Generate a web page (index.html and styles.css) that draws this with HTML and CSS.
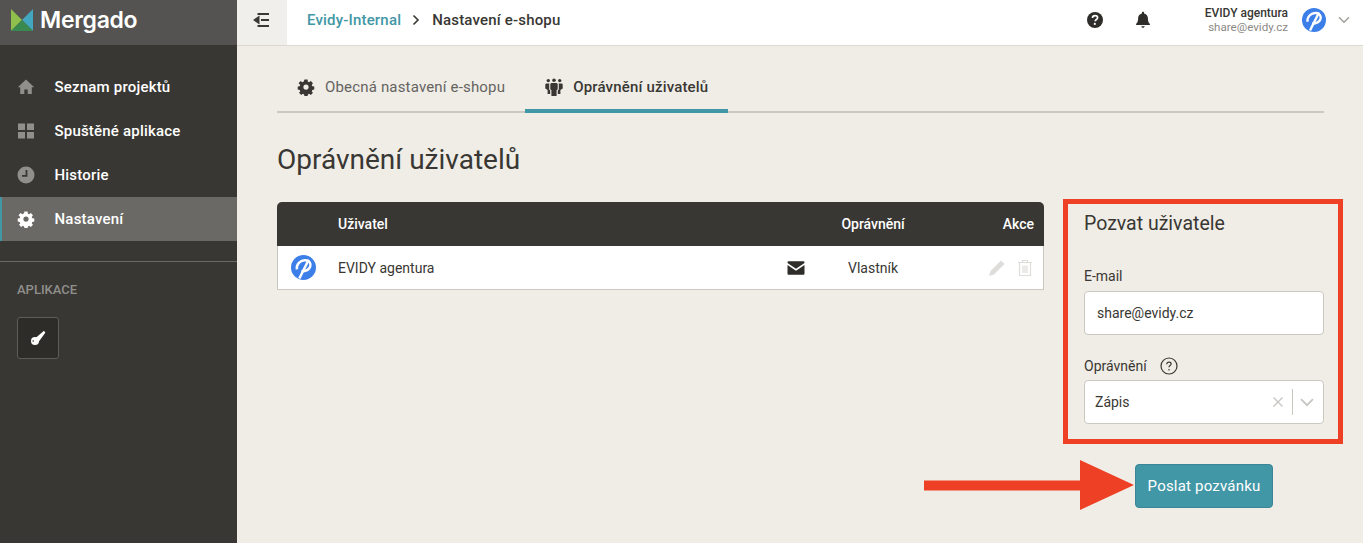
FILE: index.html
```html
<!DOCTYPE html>
<html lang="cs">
<head>
<meta charset="utf-8">
<title>Oprávnění uživatelů</title>
<link rel="stylesheet" href="styles.css">
</head>
<body>
<div class="app">
  <aside class="sidebar">
    <div class="brand">
      <svg class="brand-mark" viewBox="0 0 22 22" width="22" height="22"><polygon points="0,0 11,11 0,22" fill="#8fbf4d"/><polygon points="22,0 11,11 22,22" fill="#43a6c0"/><polygon points="0,22 11,11 22,22" fill="#3a8a50"/></svg>
      <span class="brand-name">Mergado</span>
    </div>
    <nav class="nav">
      <a class="nav-item"><svg class="nav-icon" viewBox="0 0 18 18"><path d="M9 1.500 0.800 9.200h2.400V16h4.100v-4.600h3.400V16h4.100V9.200h2.400z" fill="currentColor"/></svg><span>Seznam projektů</span></a>
      <a class="nav-item"><svg class="nav-icon" viewBox="0 0 18 18"><path d="M1 1.500h7v6.500H1zM10 1.500h7v6.500h-7zM1 10h7v6.500H1zM10 10h7v6.500h-7z" fill="currentColor"/></svg><span>Spuštěné aplikace</span></a>
      <a class="nav-item"><svg class="nav-icon" viewBox="0 0 18 18"><circle cx="9" cy="9" r="8.500" fill="currentColor"/><path d="M9.500 4v5.800H5" fill="none" stroke="#393733" stroke-width="1.800"/></svg><span>Historie</span></a>
      <a class="nav-item is-active"><svg class="nav-icon" viewBox="0 0 18 18"><use href="#gear"/></svg><span>Nastavení</span></a>
    </nav>
    <div class="apps">
      <div class="apps-title">APLIKACE</div>
      <button class="app-tile" type="button"><svg viewBox="0 0 16 16" width="16" height="16"><circle cx="5" cy="11" r="4" fill="#fff"/><path d="M5.500 8 14 .8l1.300 2L8.500 12z" fill="#fff"/><circle cx="3.200" cy="11" r=".8" fill="#2e2c29"/></svg></button>
    </div>
  </aside>
  <div class="content">
    <header class="topbar">
      <button class="collapse" type="button"><svg viewBox="0 0 16 14" width="16" height="14"><path d="M6.500 2.500 0 7l6.500 4.500zM4.500 0H16v2H4.500zM8 6h8v2H8zM4.500 12H16v2H4.500z" fill="#3a3835"/></svg></button>
      <div class="crumbs"><a class="crumb-link">Evidy-Internal</a><svg class="crumb-sep" viewBox="0 0 8 12" width="8" height="12"><path d="M1.500 1.500 6 6l-4.500 4.500" fill="none" stroke="#393733" stroke-width="1.600"/></svg><span class="crumb-current">Nastavení e-shopu</span></div>
      <div class="top-actions">
        <svg class="top-icon" viewBox="0 0 18 18" width="18" height="18"><circle cx="9" cy="9" r="8" fill="#2f2d2a"/><path d="M6.500 7c0-1.500 1.100-2.400 2.600-2.400 1.500 0 2.500.9 2.500 2.100 0 1.900-2.400 1.800-2.400 3.600" fill="none" stroke="#fff" stroke-width="1.700"/><circle cx="8.800" cy="12.900" r="1.100" fill="#fff"/></svg>
        <svg class="top-icon bell" viewBox="0 0 18 18" width="18" height="18"><path d="M9 .8c-.7 0-1.100.5-1.100 1.100v.5C5.400 3 4.100 5 4.100 7.300c0 3.800-1.200 4.700-2 5.700v1h13.800v-1c-.8-1-2-1.900-2-5.700 0-2.300-1.300-4.300-3.800-4.900v-.5C10.100 1.300 9.700.8 9 .8zM7.200 15.200c.2.900.9 1.500 1.800 1.500s1.600-.6 1.800-1.500z" fill="#2f2d2a"/></svg>
        <div class="account"><div class="account-name">EVIDY agentura</div><div class="account-mail">share@evidy.cz</div></div>
        <svg class="avatar" viewBox="0 0 24 24" width="24" height="24"><use href="#evidy"/></svg>
        <svg class="caret" viewBox="0 0 12 8" width="12" height="8"><path d="M1 1.200 6 6.200l5-5" fill="none" stroke="#a19f9b" stroke-width="1.500"/></svg>
      </div>
    </header>
    <main class="main">
      <div class="tabs">
        <a class="tab"><svg class="tab-icon" viewBox="0 0 18 18"><use href="#gear"/></svg>Obecná nastavení e-shopu</a>
        <a class="tab is-active"><svg class="tab-icon" viewBox="0 0 18 18"><circle cx="3.300" cy="2.600" r="1.700" fill="currentColor"/><circle cx="9" cy="2.200" r="1.800" fill="currentColor"/><circle cx="14.700" cy="2.600" r="1.700" fill="currentColor"/><path d="M6.200 5h5.600l.9 1v5.200l-1.100 1V18H6.400v-5.800l-1.100-1V6zM.9 5.500h3.600L4.200 6.300v5.300l1 1V16H2.600v-3.900L.3 10.500V6.500zM17.100 5.500h-3.600l.3.800v5.300l-1 1V16h2.600v-3.900l2.300-1.600v-4z" fill="currentColor"/></svg>Oprávnění uživatelů</a>
      </div>
      <h1 class="page-title">Oprávnění uživatelů</h1>
      <div class="columns">
        <div class="users">
          <div class="users-row users-head">
            <span class="col-user">Uživatel</span><span class="col-perm">Oprávnění</span><span class="col-act">Akce</span>
          </div>
          <div class="users-row users-body">
            <svg class="row-avatar" viewBox="0 0 24 24" width="25" height="25"><use href="#evidy"/></svg>
            <span class="col-user">EVIDY agentura</span>
            <svg class="mail" viewBox="0 0 18 14" width="18" height="14"><path d="M.5 1.500C.5.700 1.100.2 1.800.2h14.400c.7 0 1.300.5 1.300 1.300v.4L9 7.700.5 1.900zM.5 3.900 9 9.700l8.500-5.800v8.600c0 .8-.6 1.300-1.300 1.300H1.800c-.7 0-1.300-.5-1.300-1.300z" fill="#2f2d2a"/></svg>
            <span class="col-perm perm-value">Vlastník</span>
            <span class="col-act row-actions">
              <svg viewBox="0 0 18 18" width="18" height="18"><path d="M13 1.500 16.500 5 6 15.500l-5 1.500 1.500-5z" fill="#dfddd9"/></svg>
              <svg viewBox="0 0 16 18" width="16" height="18"><path d="M1 3.500h14M5.500 3.500V1.500h5v2M2.500 3.500v13h11v-13M6 6.500v7.500M8 6.500v7.500M10 6.500v7.500" fill="none" stroke="#dfddd9" stroke-width="1.200"/></svg>
            </span>
          </div>
        </div>
        <form class="invite">
          <h2 class="invite-title">Pozvat uživatele</h2>
          <label class="field-label field-mail">E-mail</label>
          <input class="text-input" type="text" value="share@evidy.cz">
          <div class="field-label field-perm">Oprávnění <svg class="hint" viewBox="0 0 18 18" width="18" height="18"><circle cx="9" cy="9" r="8" fill="none" stroke="#393733" stroke-width="1.200"/><path d="M6.800 7.200c0-1.300.9-2 2.200-2 1.200 0 2.100.7 2.100 1.800 0 1.600-2.100 1.500-2.100 3.200" fill="none" stroke="#393733" stroke-width="1.200"/><circle cx="9" cy="12.700" r=".8" fill="#393733"/></svg></div>
          <div class="select">
            <span class="select-value">Zápis</span>
            <svg class="select-x" viewBox="0 0 12 12" width="12" height="12"><path d="M1.500 1.500l9 9M10.500 1.500l-9 9" stroke="#c8c6c2" stroke-width="1.400"/></svg>
            <span class="select-sep"></span>
            <svg class="select-caret" viewBox="0 0 14 9" width="14" height="9"><path d="M1 1.200 7 7.200l6-6" fill="none" stroke="#c8c6c2" stroke-width="1.800"/></svg>
          </div>
          <button class="submit" type="button">Poslat pozvánku</button>
        </form>
      </div>
    </main>
  </div>
</div>
<div class="note-box"></div>
<svg class="note-arrow" viewBox="0 0 212 50" width="212" height="50"><path d="M0 20.500h156V0l54 25-54 25V30.500H0z" fill="#ee4024"/></svg>
<svg class="defs" width="0" height="0">
  <defs>
    <symbol id="evidy" viewBox="0 0 24 24"><circle cx="12" cy="12" r="12" fill="#3d7fe8"/><path d="M5.600 13.800C4.800 8.500 9.500 4.600 14 5c3.600.3 5.600 3.200 4.400 6.300-1.200 3-4.400 4.300-8.400 4.400" fill="none" stroke="#fff" stroke-width="2.400"/><path d="M17 4.500 8 22.500" stroke="#fff" stroke-width="2.400"/></symbol>
    <symbol id="gear" viewBox="0 0 18 18"><path fill="currentColor" fill-rule="evenodd" d="M7.300.8h3.400l.4 2.300 1.300.6 2-1.300 2.300 2.400-1.300 1.900.6 1.400 2.200.4v3.300l-2.200.4-.6 1.400 1.300 1.900-2.300 2.400-2-1.300-1.300.6-.4 2.200H7.300l-.4-2.200-1.300-.6-2 1.300-2.300-2.400 1.300-1.900-.6-1.400-2.200-.4V8.500l2.200-.4.600-1.400L.7 4.800 3 2.400l2 1.300 1.300-.6zM9 6.200a2.900 2.900 0 1 0 0 5.800 2.900 2.900 0 0 0 0-5.800z" transform="translate(.9 .9) scale(.9)"/></symbol>
  </defs>
</svg>
</body>
</html>
```
FILE: styles.css
```css
* { box-sizing: border-box; }
html, body { margin: 0; height: 100%; overflow: hidden; }
body { font-family: Roboto, "Liberation Sans", sans-serif; color: #393733; background: #f0ede7; position: relative; }
.defs { position: absolute; }
.app { display: flex; height: 543px; }

.sidebar { width: 237px; flex: none; background: #393733; color: #fff; }
.brand { height: 45px; background: #545351; display: flex; align-items: center; padding: 0 0 6px 11px; gap: 7px; }
.brand-name { font-family: Inter, sans-serif; font-weight: 600; font-size: 23px; letter-spacing: -.3px; }
.nav { padding-top: 20px; padding-bottom: 20px; border-bottom: 1px solid #6a6865; }
.nav-item { height: 44px; display: flex; align-items: center; gap: 19.500px; padding-left: 17px; font-size: 15px; font-weight: 500; letter-spacing: .2px; }
.nav-icon { width: 18px; height: 18px; color: #908f8c; flex: none; }
.nav-item.is-active { background: #6a6965; box-shadow: inset 2px 0 0 #4297a6; }
.nav-item.is-active .nav-icon { color: #fff; }
.apps { padding: 20px 17px; }
.apps-title { font-size: 13px; font-weight: 500; color: #908f8c; line-height: 16px; }
.app-tile { margin-top: 19px; width: 42px; height: 42px; display: flex; align-items: center; justify-content: center; background: #2e2c29; border: 1px solid #5f5d5a; border-radius: 3px; padding: 0; }

.content { flex: 1; min-width: 0; display: flex; flex-direction: column; }
.topbar { height: 46px; background: #fff; border-bottom: 1px solid #dcd9d3; display: flex; align-items: center; flex: none; }
.collapse { width: 50px; height: 45px; background: #f1efec; border: 0; padding: 0 3px 5px 0; display: flex; align-items: center; justify-content: center; }
.crumbs { margin-left: 20px; margin-bottom: 5px; display: flex; align-items: center; font-size: 15px; letter-spacing: .18px; font-weight: 500; }
.crumb-link { color: #4297a6; }
.crumb-sep { margin: 0 12px 0 11px; }
.top-actions { margin-left: auto; display: flex; align-items: center; padding: 0 13px 5px 0; }
.top-icon { margin-right: 30px; }
.top-icon.bell { margin-right: 53px; }
.account { text-align: right; font-size: 12px; line-height: 14px; margin-right: 14px; }
.account-name { font-weight: 500; }
.account-mail { color: #8b8986; font-size: 11.600px; }
.avatar { margin-right: 12px; }

.main { padding: 21px 39px 0 40px; flex: 1; }
.tabs { display: flex; height: 46px; border-bottom: 2px solid #cbc8c2; }
.tab { height: 46px; display: flex; align-items: center; gap: 10px; padding: 0 20px 6px; font-size: 15px; letter-spacing: .17px; color: #65635f; }
.tab-icon { width: 18px; height: 18px; flex: none; color: #393733; }
.tab.is-active { color: #393733; font-weight: 500; border-bottom: 4px solid #4297a6; padding-bottom: 2px; }
.page-title { margin: 28px 0 0; font-size: 28px; font-weight: 400; line-height: 38px; }
.columns { display: grid; grid-template-columns: 767px 240px; gap: 40px; margin-top: 23px; }

.users { height: 88px; background: #fff; border: 1px solid #cbc8c2; border-top: 0; border-radius: 5px 5px 0 0; }
.users-row { display: flex; align-items: center; font-size: 14px; }
.users-head { height: 44px; margin: 0 -1px; background: #393733; color: #fff; font-weight: 500; border-radius: 5px 5px 0 0; }
.users-body { height: 43px; }
.col-user { margin-left: 61px; }
.users-head .col-perm { margin-left: auto; }
.users-head .col-act { margin-left: 98px; margin-right: 10px; }
.row-avatar { margin-left: 13px; flex: none; }
.row-avatar + .col-user { margin-left: 22px; }
.mail { margin-left: auto; flex: none; }
.perm-value { margin-left: 43px; width: 140px; }
.row-actions { display: flex; align-items: center; gap: 11px; width: 45px; margin-right: 10px; }

.invite { position: relative; height: 306px; }
.invite-title { margin: 9px 0 0; font-size: 19.500px; font-weight: 400; line-height: 26px; }
.field-label { font-size: 14px; line-height: 18px; display: flex; align-items: center; }
.field-mail { margin-top: 30px; }
.text-input { display: block; width: 240px; height: 44px; margin-top: 6px; border: 1px solid #cbc8c2; border-radius: 4px; background: #fff; padding: 0 12px; font: 14px Roboto, sans-serif; color: #393733; }
.field-perm { margin-top: 22px; height: 18px; gap: 13px; }
.select { height: 44px; margin-top: 5px; background: #fff; border: 1px solid #cbc8c2; border-radius: 4px; display: flex; align-items: center; padding: 0 9px 0 10px; font-size: 14px; }
.select-value { flex: 1; }
.select-sep { width: 1px; height: 26px; background: #cbc8c2; margin: 0 7px 0 8px; }
.submit { display: block; margin: 40px 0 0 51px; width: 138px; height: 44px; background: #4297a6; color: #fff; border: 1px solid #3a8696; border-radius: 4px; font: 400 15px Roboto, sans-serif; letter-spacing: .2px; padding: 0; }

.note-box { position: absolute; left: 1063px; top: 199px; width: 280px; height: 245px; border: 5px solid #ee4024; }
.note-arrow { position: absolute; left: 924px; top: 460px; }
```
